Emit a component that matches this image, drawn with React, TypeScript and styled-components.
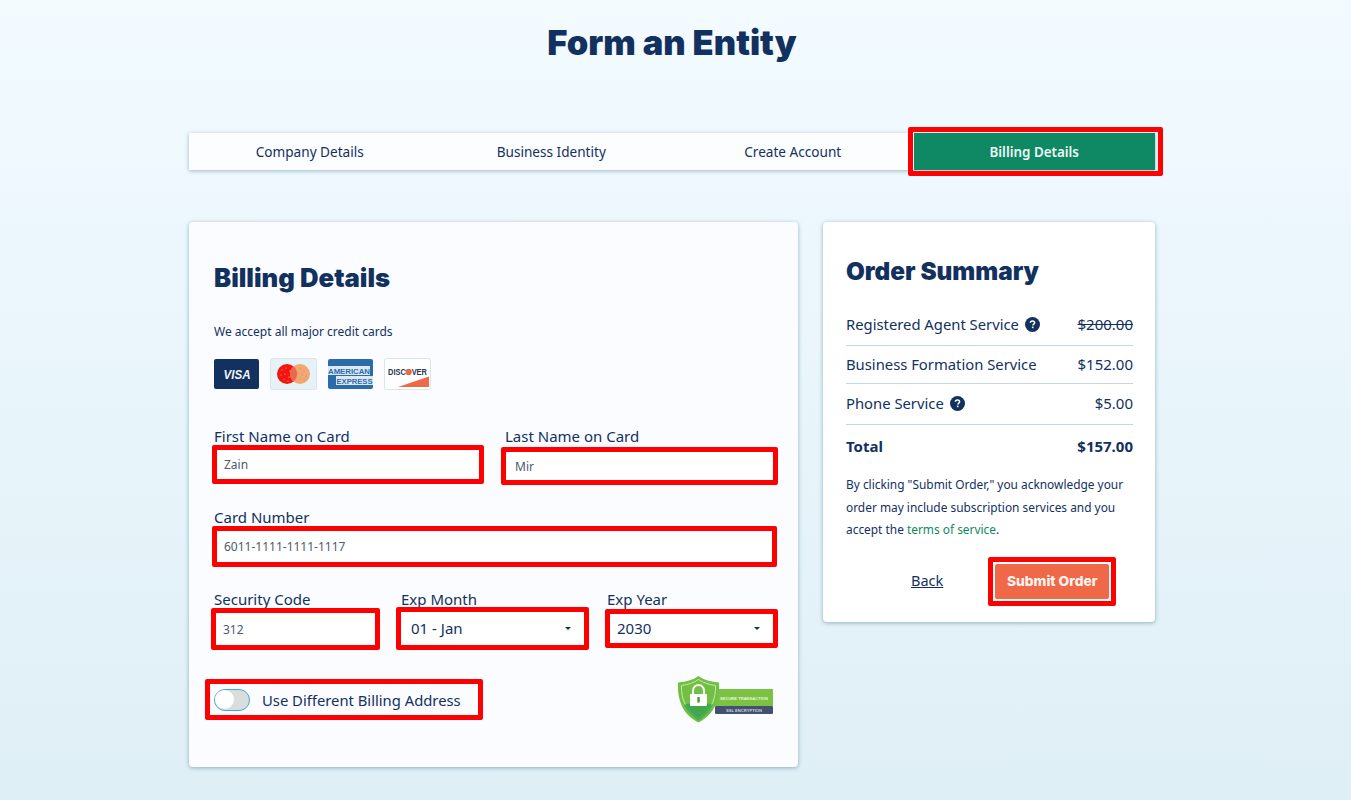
import React from 'react';
import styled, { createGlobalStyle } from 'styled-components';

const navy = '#12315f';

const GlobalStyle = createGlobalStyle`
  html, body {
    margin: 0;
    padding: 0;
    height: 800px;
    overflow: hidden;
  }
  body {
    font-family: "Noto Sans", "Open Sans", sans-serif;
    color: ${navy};
  }
`;

const tabs = ['Company Details', 'Business Identity', 'Create Account', 'Billing Details'];

const orderRows = [
  { label: 'Registered Agent Service', price: '$200.00', help: true, struck: true, height: 41 },
  { label: 'Business Formation Service', price: '$152.00', help: false, struck: false, height: 38 },
  { label: 'Phone Service', price: '$5.00', help: true, struck: false, height: 41 },
];

const masterDots = [
  [12, 12], [16, 10], [20, 13], [11, 17], [15, 16], [19, 19], [14, 21], [18, 23],
  [30, 10], [34, 13], [28, 15], [32, 17], [36, 18], [30, 21], [34, 22],
];

const VisaLogo = () => (
  <svg width="45" height="30" viewBox="0 0 45 30">
    <rect width="45" height="30" rx="2" fill="#12315f" />
    <text x="23" y="19.500" textAnchor="middle" fontFamily="Liberation Sans" fontSize="12" fontWeight="700" fontStyle="italic" fill="#f2f5f8" textLength="27" lengthAdjust="spacingAndGlyphs">VISA</text>
  </svg>
);

const MasterLogo = () => (
  <svg width="47" height="32" viewBox="0 0 47 32">
    <rect x="0.5" y="0.5" width="46" height="31" rx="2" fill="#e6f2f6" stroke="#d5e6ec" />
    <circle cx="17" cy="16" r="10" fill="#f5140f" />
    <circle cx="30" cy="16" r="10" fill="#f2a674" />
    <path d="M23.500 8.300a10 10 0 0 1 0 15.400a10 10 0 0 1 0-15.400z" fill="#e8684e" />
    {masterDots.map(([x, y]) => (
      <circle key={`${x}-${y}`} cx={x} cy={y} r="0.6" fill={x < 23 ? '#fbb' : '#e0804f'} />
    ))}
  </svg>
);

const AmexLogo = () => (
  <svg width="45" height="30" viewBox="0 0 45 30">
    <rect width="45" height="30" rx="2" fill="#2a6cab" />
    <rect x="0" y="7" width="42" height="9" fill="#dce8f2" />
    <rect x="8" y="17" width="37" height="9" fill="#dce8f2" />
    <text x="21" y="14.500" textAnchor="middle" fontFamily="Liberation Sans" fontSize="8" fontWeight="700" fill="#2a6cab" textLength="42" lengthAdjust="spacingAndGlyphs">AMERICAN</text>
    <text x="26.500" y="24.500" textAnchor="middle" fontFamily="Liberation Sans" fontSize="8" fontWeight="700" fill="#2a6cab" textLength="36" lengthAdjust="spacingAndGlyphs">EXPRESS</text>
  </svg>
);

const DiscoverLogo = () => (
  <svg width="47" height="32" viewBox="0 0 47 32">
    <rect x="0.5" y="0.5" width="46" height="31" rx="2" fill="#fff" stroke="#d5e6ec" />
    <text x="23.500" y="17" textAnchor="middle" fontFamily="Liberation Sans" fontSize="8.500" fontWeight="700" fill="#2c3550" textLength="39" lengthAdjust="spacingAndGlyphs">DISCOVER</text>
    <circle cx="24.500" cy="14" r="3" fill="#ee6a47" />
    <path d="M14 29L45 18.500V29z" fill="#ee6a47" />
  </svg>
);

const HelpIcon = () => (
  <svg width="15" height="15" viewBox="0 0 15 15">
    <circle cx="7.5" cy="7.5" r="7.5" fill="#12315f" />
    <path d="M5.400 5.800c0-1.200.9-1.900 2.100-1.900s2.100.7 2.100 1.800c0 1.400-1.700 1.400-1.700 2.700" fill="none" stroke="#fff" strokeWidth="1.500" />
    <rect x="6.900" y="9.600" width="1.600" height="1.600" fill="#fff" />
  </svg>
);

const SecureBadge = () => (
  <svg width="97" height="47" viewBox="0 0 97 47">
    <rect x="38" y="13" width="58" height="17" fill="#7cc242" />
    <rect x="38" y="30" width="58" height="8" rx="1" fill="#44506f" />
    <path d="M21.500 0C27 4 34 6 42 6.500C43 24 37 39 21.500 46.500C6 39 0 24 1 6.500C9 6 16 4 21.500 0z" fill="#72c043" />
    <path d="M21.500 3.500C26.500 7 32 8.500 38.500 9.500C39 23 34 35 21.500 42.500C9 35 4 23 4.500 9.500C11 8.500 16.500 7 21.500 3.500z" fill="none" stroke="#d8efc4" strokeWidth="0.8" />
    <path d="M7 29C17 25 26 25 36 29C33 35 28 40 21.500 44.500C15 40 10 35 7 29z" fill="#2e9c4e" opacity="0.7" />
    <path d="M16 18v-3.500a5.500 5.500 0 0 1 11 0V18" fill="none" stroke="#fff" strokeWidth="2" />
    <rect x="13" y="18" width="17" height="12" rx="1" fill="#fff" />
    <rect x="20.300" y="21" width="2.500" height="5.500" fill="#4f9b3a" />
    <text x="67" y="24" textAnchor="middle" fontFamily="Liberation Sans" fontSize="4.400" fontWeight="700" fill="#eaf6dc" textLength="48" lengthAdjust="spacingAndGlyphs">SECURE TRANSACTION</text>
    <text x="67" y="35.500" textAnchor="middle" fontFamily="Liberation Sans" fontSize="4.400" fontWeight="700" fill="#c9d0dd" textLength="36" lengthAdjust="spacingAndGlyphs">SSL ENCRYPTION</text>
  </svg>
);

const App = () => {
  return (
    <Page>
      <GlobalStyle />
      <Title>Form an Entity</Title>
      <Steps>
        {tabs.map((tab, i) => (
          <Step key={tab} $active={i === tabs.length - 1}>
            {tab}
          </Step>
        ))}
      </Steps>
      <Columns>
        <BillingCard>
          <BillingTitle>Billing Details</BillingTitle>
          <Accept>We accept all major credit cards</Accept>
          <CardLogos>
            <VisaLogo />
            <MasterLogo />
            <AmexLogo />
            <DiscoverLogo />
          </CardLogos>
          <FieldRow $gap={17} $top={37}>
            <Field>
              <Label>First Name on Card</Label>
              <InputBox $width={272} $height={39} $shift={-2} $drop={0}>Zain</InputBox>
            </Field>
            <Field>
              <Label $indent={4}>Last Name on Card</Label>
              <InputBox $width={277} $height={38} $shift={0} $drop={2} $pad={9}>Mir</InputBox>
            </Field>
          </FieldRow>
          <FieldRow $gap={0} $top={23}>
            <Field>
              <Label>Card Number</Label>
              <InputBox $width={565} $height={41} $shift={-2} $drop={0}>6011-1111-1111-1117</InputBox>
            </Field>
          </FieldRow>
          <FieldRow $gap={16} $top={23}>
            <Field>
              <Label>Security Code</Label>
              <InputBox $width={169} $height={42} $shift={-3} $drop={0}>312</InputBox>
            </Field>
            <Field>
              <Label $indent={5}>Exp Month</Label>
              <SelectBox $width={193} $height={43} $drop={-1}>
                01 - Jan
                <Caret />
              </SelectBox>
            </Field>
            <Field>
              <Label $indent={2}>Exp Year</Label>
              <SelectBox $width={173} $height={39} $drop={1} $pad={7}>
                2030
                <Caret />
              </SelectBox>
            </Field>
          </FieldRow>
          <ToggleRow>
            <ToggleHighlight>
              <Toggle />
              <ToggleLabel>Use Different Billing Address</ToggleLabel>
            </ToggleHighlight>
            <SecureBadge />
          </ToggleRow>
        </BillingCard>

        <SummaryCard>
          <SummaryTitle>Order Summary</SummaryTitle>
          {orderRows.map((row) => (
            <OrderRow key={row.label} $height={row.height}>
              <RowLabel>
                {row.label}
                {row.help && <HelpIcon />}
              </RowLabel>
              <Price $struck={row.struck}>{row.price}</Price>
            </OrderRow>
          ))}
          <TotalRow>
            <span>Total</span>
            <span>$157.00</span>
          </TotalRow>
          <Terms>
            By clicking "Submit Order," you acknowledge your order may include subscription services and you
            accept the <TermsLink>terms of service</TermsLink>.
          </Terms>
          <Actions>
            <BackLink>Back</BackLink>
            <SubmitHighlight>
              <SubmitButton>Submit Order</SubmitButton>
            </SubmitHighlight>
          </Actions>
        </SummaryCard>
      </Columns>
    </Page>
  );
};

export default App;

const Page = styled.div`
  width: 1351px;
  height: 800px;
  padding: 24px 7px 0 0;
  box-sizing: border-box;
  background: linear-gradient(180deg, #f3fbff 0%, #ecf7fd 30%, #dfeff6 100%);
  overflow: hidden;
`;

const Title = styled.h1`
  margin: 0;
  font-family: Inter, "Noto Sans", sans-serif;
  font-weight: 900;
  font-size: 34.5px;
  line-height: 38px;
  text-align: center;
  color: ${navy};
`;

const Steps = styled.div`
  display: grid;
  grid-template-columns: repeat(4, 1fr);
  width: 966px;
  height: 37px;
  margin: 71px auto 0;
  background: #fbfdff;
  box-shadow: 0 1px 4px rgba(90, 130, 150, 0.55);
`;

const Step = styled.div<{ $active: boolean }>`
  position: relative;
  display: flex;
  align-items: center;
  justify-content: center;
  font-size: ${(p) => (p.$active ? 13.4 : 13.6)}px;
  font-weight: ${(p) => (p.$active ? 600 : 400)};
  color: ${(p) => (p.$active ? '#eef7f5' : navy)};
  background: ${(p) => (p.$active ? '#0e8963' : 'transparent')};
  ${(p) =>
    p.$active &&
    `
    &::after {
      content: '';
      position: absolute;
      top: -6px;
      left: -6px;
      right: -8px;
      bottom: -6px;
      border: 5px solid #fe0000;
      border-radius: 2px;
    }
  `}
`;

const Columns = styled.div`
  display: flex;
  align-items: flex-start;
  gap: 25px;
  width: 966px;
  margin: 52px auto 0;
`;

const Card = styled.section`
  box-sizing: border-box;
  border-radius: 4px;
  box-shadow: 0 1px 4px rgba(90, 130, 150, 0.6);
`;

const BillingCard = styled(Card)`
  width: 609px;
  height: 545px;
  padding: 40px 20px 0 25px;
  background: #fbfcff;
`;

const BillingTitle = styled.h2`
  margin: 0;
  font-family: Inter, "Noto Sans", sans-serif;
  font-weight: 900;
  font-size: 25.7px;
  line-height: 32px;
  color: ${navy};
`;

const Accept = styled.p`
  margin: 30px 0 0;
  font-size: 12px;
  line-height: 16px;
`;

const CardLogos = styled.div`
  display: flex;
  align-items: center;
  gap: 11px;
  height: 32px;
  margin-top: 18px;
`;

const FieldRow = styled.div<{ $gap: number; $top: number }>`
  display: flex;
  gap: ${(p) => p.$gap}px;
  margin-top: ${(p) => p.$top}px;
`;

const Field = styled.div`
  display: flex;
  flex-direction: column;
`;

const Label = styled.label<{ $indent?: number }>`
  height: 18px;
  margin-left: ${(p) => p.$indent || 0}px;
  font-size: 15px;
  line-height: 18px;
  white-space: nowrap;
`;

const InputBox = styled.div<{ $width: number; $height: number; $shift?: number; $drop: number; $pad?: number }>`
  display: flex;
  align-items: center;
  box-sizing: border-box;
  width: ${(p) => p.$width}px;
  height: ${(p) => p.$height}px;
  margin-left: ${(p) => p.$shift || 0}px;
  margin-top: ${(p) => p.$drop}px;
  padding-left: ${(p) => p.$pad ?? 7}px;
  border: 5px solid #fe0000;
  border-radius: 2px;
  background: #fff;
  font-size: 12px;
  color: #4d5a70;
`;

const SelectBox = styled(InputBox)`
  position: relative;
  padding-left: ${(p) => p.$pad ?? 10}px;
  padding-bottom: 2px;
  font-size: 15px;
  color: ${navy};
`;

const Caret = styled.span`
  position: absolute;
  right: 13px;
  top: 50%;
  margin-top: -2px;
  border-left: 3px solid transparent;
  border-right: 3px solid transparent;
  border-top: 3px solid ${navy};
`;

const ToggleRow = styled.div`
  display: flex;
  align-items: center;
  justify-content: space-between;
  margin: 26px 4px 0 -9px;
`;

const ToggleHighlight = styled.div`
  display: flex;
  align-items: center;
  gap: 12px;
  box-sizing: border-box;
  width: 278px;
  height: 41px;
  padding-left: 4px;
  border: 5px solid #fe0000;
  border-radius: 2px;
`;

const Toggle = styled.span`
  position: relative;
  box-sizing: border-box;
  width: 36px;
  height: 22px;
  border: 1.5px solid #3fa4ea;
  border-radius: 11px;
  background: #d7dedb;
  &::before {
    content: '';
    position: absolute;
    left: 0;
    top: 0;
    width: 19px;
    height: 19px;
    border-radius: 50%;
    background: #fff;
  }
`;

const ToggleLabel = styled.span`
  font-size: 14.8px;
  white-space: nowrap;
`;

const SummaryCard = styled(Card)`
  width: 332px;
  height: 400px;
  padding: 32px 22px 0 23px;
  background: #fff;
`;

const SummaryTitle = styled.h2`
  margin: 0 0 17px;
  font-family: Inter, "Noto Sans", sans-serif;
  font-weight: 900;
  font-size: 24.3px;
  line-height: 34px;
  color: ${navy};
`;

const OrderRow = styled.div<{ $height: number }>`
  display: flex;
  align-items: center;
  justify-content: space-between;
  box-sizing: border-box;
  height: ${(p) => p.$height}px;
  padding-bottom: 2px;
  border-bottom: 1px solid #c3d8e4;
  font-size: 14.8px;
`;

const RowLabel = styled.span`
  display: flex;
  align-items: center;
  gap: 6px;
  white-space: nowrap;
`;

const Price = styled.span<{ $struck: boolean }>`
  font-size: 15px;
  text-decoration: ${(p) => (p.$struck ? 'line-through' : 'none')};
`;

const TotalRow = styled.div`
  display: flex;
  align-items: center;
  justify-content: space-between;
  height: 41px;
  font-size: 15px;
  font-weight: 700;
`;

const Terms = styled.p`
  margin: 7px 0 0;
  font-size: 11.9px;
  line-height: 22.500px;
`;

const TermsLink = styled.span`
  color: #0e8963;
`;

const Actions = styled.div`
  display: flex;
  align-items: center;
  margin-top: 16px;
`;

const BackLink = styled.a`
  margin: 0 0 2px 65px;
  font-size: 14.5px;
  text-decoration: underline;
`;

const SubmitHighlight = styled.div`
  box-sizing: border-box;
  width: 128px;
  height: 49px;
  margin-left: 45px;
  padding: 2px;
  border: 5px solid #fe0000;
  border-radius: 2px;
`;

const SubmitButton = styled.button`
  display: block;
  width: 100%;
  height: 100%;
  padding: 0;
  border: 0;
  border-radius: 2px;
  background: #ef6848;
  color: #fdf3ee;
  font-family: Inter, "Noto Sans", sans-serif;
  font-weight: 800;
  font-size: 13.800px;
`;
